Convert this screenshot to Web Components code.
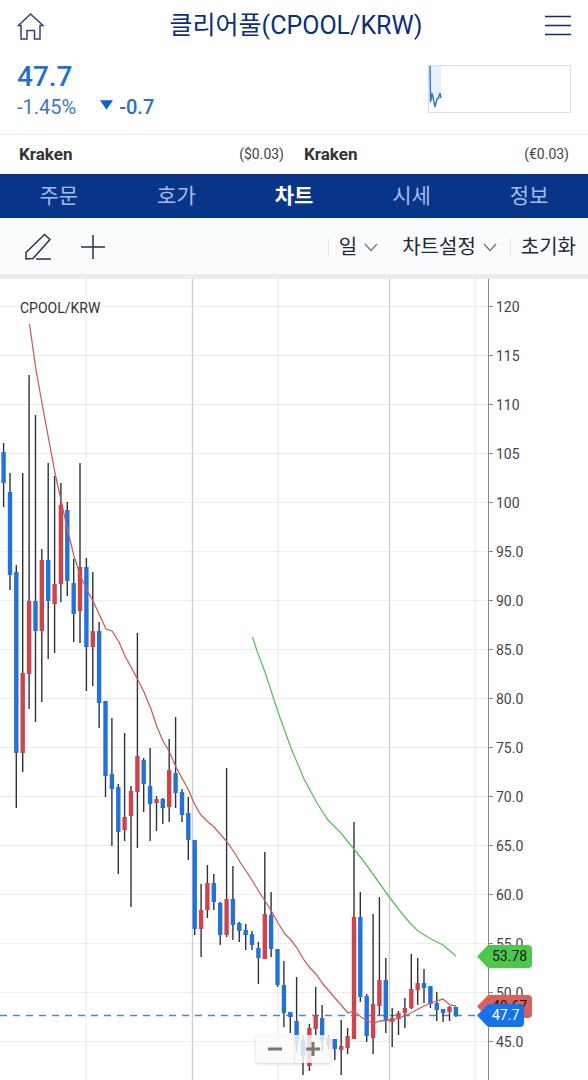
<!DOCTYPE html>
<html lang="ko">
<head>
<meta charset="utf-8">
<meta name="viewport" content="width=device-width, initial-scale=1">
<title>클리어풀(CPOOL/KRW)</title>
<style>
body { margin: 0; background: #fff; font-family: Roboto, "Noto Sans CJK KR", sans-serif; color: #333; }
</style>
</head>
<body>
<coin-page></coin-page>

<template id="page">
  <style>
    :host { display: flex; flex-direction: column; min-height: 100vh; }
  </style>
  <page-header><span>클리어풀(CPOOL/KRW)</span></page-header>
  <price-summary></price-summary>
  <exchange-rates>
    <exchange-rate name="Kraken">($0.03)</exchange-rate>
    <exchange-rate name="Kraken">(€0.03)</exchange-rate>
  </exchange-rates>
  <tab-bar></tab-bar>
  <chart-toolbar></chart-toolbar>
  <price-chart></price-chart>
</template>

<template id="header">
  <style>
    :host { display: grid; grid-template-columns: 32px 1fr 28px; align-items: center; height: 52px; padding: 0 16px; color: #0c2f7a; }
    h1 { margin: 0; font-size: 25px; line-height: 40px; font-weight: 400; text-align: center; white-space: nowrap; }
    a, button { display: block; height: 28px; padding: 0; border: 0; background: none; color: inherit; }
    svg { display: block; }
  </style>
  <a href="#home" aria-label="홈"><svg width="30" height="28" viewBox="0 0 30 28" fill="none" stroke="#33417c" stroke-width="1.5"><path d="M5 13.500H2.500L14.500 2 27 13.500H24V27H18.500V18.500H11V27H5Z"/></svg></a>
  <h1><slot></slot></h1>
  <button aria-label="메뉴"><svg width="28" height="28" viewBox="0 0 28 28" stroke="#0c2f6c" stroke-width="1.5"><path d="M1 4.500H27M1 13.500H27M1 22.500H27"/></svg></button>
</template>

<template id="summary">
  <style>
    :host { display: flex; justify-content: space-between; align-items: flex-start; box-sizing: border-box; height: 83px; padding: 8px 17px 0; border-bottom: 1px solid #ececee; color: #226fd0; }
    strong { display: block; font-size: 28px; line-height: 34px; font-weight: 500; }
    .change { display: flex; align-items: center; font-size: 20px; line-height: 26px; color: #3c78c4; }
    .change svg { margin: 0 6px 4px 24px; }
    .change b { font-weight: 500; color: #2a6fc8; }
    .mini { display: block; margin-top: 5px; }
  </style>
  <div>
    <strong>47.7</strong>
    <div class="change"><span>-1.45%</span><svg width="13" height="10" viewBox="0 0 14 10"><path d="M0 0H14L7 10Z" fill="#1560c4"/></svg><b>-0.7</b></div>
  </div>
  <svg class="mini" width="143" height="48" viewBox="0 0 143 48"><rect x="2" y="1" width="11" height="33" fill="#e8effb"/><rect x=".5" y=".5" width="142" height="47" fill="none" stroke="#dcdde0"/><path d="M2 1 2.500 37 4 29 5 32 7 42 9 34 10.500 33 12 28 13 33" fill="none" stroke="#2d72c8" stroke-width="1.400"/></svg>
</template>

<template id="rates">
  <style>
    :host { display: grid; grid-template-columns: 1fr 1fr; column-gap: 20px; box-sizing: border-box; height: 39px; padding: 0 19px 2px; }
  </style>
  <slot></slot>
</template>

<template id="rate">
  <style>
    :host { display: flex; justify-content: space-between; align-items: center; font-size: 14px; color: #444; }
    b { font-size: 17px; font-weight: 700; color: #333; }
  </style>
  <b></b><slot></slot>
</template>

<template id="tabs">
  <style>
    :host { display: block; background: #083589; }
    nav { display: grid; grid-template-columns: repeat(5, 1fr); height: 44px; }
    a { font-size: 21px; line-height: 44px; text-align: center; text-decoration: none; color: #a9bbea; }
    a[aria-current] { color: #fff; font-weight: 700; }
  </style>
  <nav>
    <a href="#order">주문</a><a href="#book">호가</a><a href="#chart" aria-current="page">차트</a><a href="#price">시세</a><a href="#info">정보</a>
  </nav>
</template>

<template id="toolbar">
  <style>
    :host { display: flex; align-items: center; box-sizing: border-box; height: 61px; padding: 2px 12px 0 24px; background: #f9fbfd; border-bottom: 5px solid #e9ecf0; }
    button { display: flex; align-items: center; gap: 7px; height: 28px; padding: 0; border: 0; background: none; font: inherit; font-size: 20px; line-height: 28px; color: #222a33; white-space: nowrap; }
    .tools { display: flex; gap: 28px; margin-right: auto; }
    i { width: 1px; height: 17px; background: #e4e8ec; margin: 0 10px 0 13px; }
    .settings { margin-left: 24px; }
    svg { display: block; fill: none; }
  </style>
  <div class="tools">
    <button aria-label="그리기"><svg width="28" height="28" viewBox="0 0 28 28" stroke="#2b3440" stroke-width="1.500"><path d="M20.500 1.500 26 6.500 9 25.500 2 26V19.500ZM12 26H27"/></svg></button>
    <button aria-label="추가"><svg width="26" height="28" viewBox="0 0 26 28" stroke="#2b3440" stroke-width="1.500"><path d="M1 14H25M13 2V26"/></svg></button>
  </div>
  <i></i>
  <button>일<svg width="14" height="9" viewBox="0 0 14 9" stroke="#70777e" stroke-width="1.300"><path d="M1 1 7 7.500 13 1"/></svg></button>
  <button class="settings">차트설정<svg width="14" height="9" viewBox="0 0 14 9" stroke="#70777e" stroke-width="1.300"><path d="M1 1 7 7.500 13 1"/></svg></button>
  <i></i>
  <button>초기화</button>
</template>

<template id="chart">
  <style>
    :host { display: grid; grid-template-columns: 1fr 100px; position: relative; height: 801px; overflow: hidden; background: #fff; }
    .plot { display: block; width: 100%; height: 801px; }
    h2 { position: absolute; left: 20px; top: 20px; margin: 0; font-size: 14px; line-height: 18px; font-weight: 400; color: #333; }
    .axis { position: relative; border-left: 1px solid #85898d; }
    ol { margin: 0; padding: 3px 0 0; list-style: none; }
    li { display: flex; align-items: center; gap: 3px; height: 49px; font-size: 14px; color: #444; }
    li::before { content: ""; width: 4px; height: 1px; background: #85898d; }
    .zoom { position: absolute; left: 256px; top: 756px; display: grid; grid-template-columns: 1fr 1fr; width: 75px; height: 28px; border-radius: 3px; background: rgba(250,250,250,.82); box-shadow: 0 1px 3px rgba(0,0,0,.18); }
    .zoom button { display: grid; place-items: center; padding: 0; border: 0; background: none; }
    .zoom button + button { border-left: 1px solid #e8e8e8; }
    price-tag { position: absolute; left: -12px; }
    .green { top: 666px; } .red { top: 716px; } .now { top: 725px; }
  </style>
  <svg class="plot" viewBox="0 0 488 801" preserveAspectRatio="none" fill="none"></svg>
  <h2>CPOOL/KRW</h2>
  <div class="axis">
    <ol></ol>
    <price-tag class="green" style="--tag:#4cc84c;--ink:#161616">53.78</price-tag>
    <price-tag class="red" style="--tag:#d9605c;--ink:#161616">48.67</price-tag>
    <price-tag class="now" style="--tag:#1674ea;--ink:#fff">47.7</price-tag>
  </div>
  <div class="zoom">
    <button aria-label="축소"><svg width="14" height="14"><path d="M0 7H14" stroke="#777" stroke-width="3"/></svg></button>
    <button aria-label="확대"><svg width="14" height="14"><path d="M0 7H14M7 0V14" stroke="#777" stroke-width="3"/></svg></button>
  </div>
</template>

<template id="tag">
  <style>
    :host { display: flex; height: 23px; font-size: 14px; line-height: 23px; color: var(--ink); }
    svg { display: block; fill: var(--tag); margin-right: -1px; }
    span { padding: 0 5px 0 3px; border-radius: 0 4px 4px 0; background: var(--tag); }
  </style>
  <svg width="13" height="23" viewBox="0 0 13 23"><path d="M0 11.500 10 1Q11 0 13 0V23Q11 23 10 22Z"/></svg><span><slot></slot></span>
</template>

<script>
function define(name, templateId, setup) {
  customElements.define(name, class extends HTMLElement {
    constructor() {
      super();
      this.attachShadow({ mode: 'open' }).append(document.getElementById(templateId).content.cloneNode(true));
    }
    connectedCallback() { if (setup) setup(this.shadowRoot, this); }
  });
}

// Each candle: wick top, wick bottom, body top, body bottom, r(ise) or b (fall).
const CANDLES = `443 507 452 483 b|473 590 492 575 b|565 808 572 753 b|473 772 673 753 r|375 709 601 674 r|415 722 601 631 b
549 702 560 631 r|463 659 560 601 b|476 653 584 604 r|483 602 505 584 r|502 596 510 581 b|559 642 583 614 b
463 643 567 611 r|558 691 567 647 b|572 686 631 647 r|622 728 631 703 b|701 797 701 776 b|718 846 774 789 b
784 874 787 832 b|733 841 817 830 r|786 907 791 816 r|633 848 756 792 r|758 812 760 784 b|748 841 786 804 b
796 831 799 803 r|798 824 799 808 b|739 822 770 807 r|717 808 773 793 b|789 822 792 815 b|797 860 813 840 b
840 935 840 929 b|884 957 910 929 r|865 918 883 910 r|874 910 883 902 b|902 945 903 935 b|768 937 899 935 r
866 940 899 925 b|922 942 923 931 b|924 950 930 935 b|931 950 934 945 b|942 984 948 958 b|852 959 914 959 r
892 957 915 949 b|949 987 949 985 b|961 1027 985 1013 b|1012 1033 1012 1017 b|977 1052 1021 1044 b|1035 1075 1040 1056 b
1024 1071 1028 1066 r|987 1035 1015 1029 r|1005 1051 1018 1041 b|1035 1050 1038 1045 r|1039 1060 1039 1049 b|1020 1075 1046 1050 r
1028 1054 1036 1048 r|822 1039 917 1039 r|892 1002 917 997 b|994 1042 996 1036 b|914 1054 1004 1038 r|897 1015 980 1006 r
958 1033 980 1021 b|1008 1047 1018 1022 r|1011 1035 1013 1019 r|998 1028 1008 1013 r|954 1009 989 1008 r|958 1005 983 990 r
969 1003 983 988 b|986 1008 986 1004 b|992 1021 1003 1010 b|1009 1022 1009 1013 b|1006 1021 1007 1012 r|1007 1017 1007 1016 b`
  .split(/[|\n]/).map(row => row.trim().split(' '));
const SHORT_AVERAGE = '29.5,324 36,370 42,403 49,441 55,473 61,500 68,532 74,556 80,575 87,590 93,601 106,629 112,631 119,642 125,656 131,667 138,680 144,692 151,709 157,727 163,741 169,751 176,767 188,789 195,805 201,815 208,822 214,827 221,835 227,842 234,852 240,862 250,877 258,890 265,901 272,912 278,923 285,934 291,940 297,948 304,960 310,968 316,974 323,984 335,998 342,1006 348,1013 354,1011 361,1017 367,1021 374,1023 380,1021 392,1020 399,1018 411,1013 424,1006 436,1001 443,999 450,1005 456,1006';
const LONG_AVERAGE = '252.5,637 257,651 265,672 278,712 291,748 304,779 317,803 328,820 341,833 348,842 354,849 365,863 380,884 390,898 400,911 410,923 418,931 431,939 443,945 456,956';

function drawChart(root) {
  let out = '';
  for (let i = 0; i < 16; i++) out += `<path d="M0 ${27 + i * 49}.5H488" stroke="#ededee"/>`;
  for (const x of [86, 278, 475]) out += `<path d="M${x} 0V801" stroke="#e9e9ea"/>`;
  for (const x of [192.5, 389.5]) out += `<path d="M${x} 0V801" stroke="#cdcfd1" stroke-width="1.400"/>`;
  out += '<g transform="translate(0 -279)"><path d="M0 1015.500H488" stroke="#4e88c4" stroke-width="1.300" stroke-dasharray="7 6"/>';
  CANDLES.forEach(([top, bottom, open, close, kind], i) => {
    const x = (3.6 + i * 6.37).toFixed(1);
    out += `<path d="M${x} ${top}V${bottom}" stroke="#2c3339" stroke-width="1.400"/><path d="M${x} ${open}V${close}" stroke="${kind === 'r' ? '#cf4449' : '#2272da'}" stroke-width="4.400"/>`;
  });
  out += `<polyline points="${SHORT_AVERAGE}" stroke="#cb5f5c" stroke-width="1.300"/><polyline points="${LONG_AVERAGE}" stroke="#5fbf5c" stroke-width="1.300"/></g>`;
  root.querySelector('.plot').innerHTML = out;
  root.querySelector('ol').innerHTML = Array.from({ length: 16 }, (_, i) => 120 - i * 5)
    .map(value => `<li>${value < 100 ? value.toFixed(1) : value}</li>`).join('');
}

define('price-tag', 'tag');
define('price-chart', 'chart', drawChart);
define('chart-toolbar', 'toolbar');
define('tab-bar', 'tabs');
define('exchange-rate', 'rate', (root, host) => { root.querySelector('b').textContent = host.getAttribute('name'); });
define('exchange-rates', 'rates');
define('price-summary', 'summary');
define('page-header', 'header');
define('coin-page', 'page');
</script>
</body>
</html>
